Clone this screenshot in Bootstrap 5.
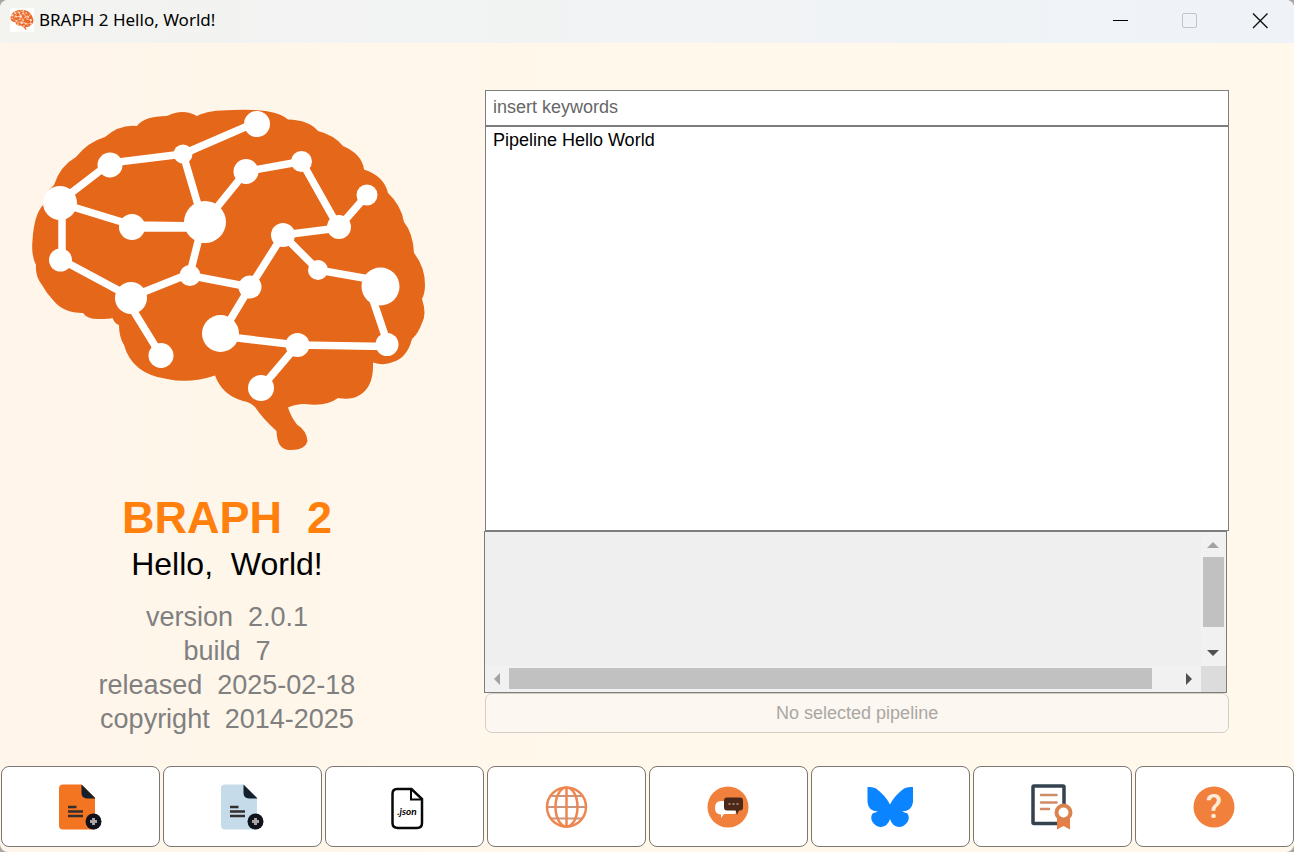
<!DOCTYPE html>
<html lang="en">
<head>
<meta charset="utf-8">
<meta name="viewport" content="width=device-width, initial-scale=1">
<title>BRAPH 2 Hello, World!</title>
<link href="https://cdn.jsdelivr.net/npm/bootstrap@5.3.0/dist/css/bootstrap.min.css" rel="stylesheet">
<style>
  html { background: #a9a6a6; }
  body { background: transparent; font-family: "Liberation Sans", Arial, sans-serif; }
  .app-window { background: linear-gradient(90deg, #fff5ea, #fff8eb 50%); border-radius: 8px; overflow: hidden; }
  .title-bar { height: 43px; padding-left: 10px; background: linear-gradient(90deg, #f3f3f0, #eff3f8); font-family: "Noto Sans", sans-serif; font-size: 17px; line-height: 24px; color: #000; }
  .title-bar h1 { font-size: 17px; line-height: 24px; font-weight: 400; margin: 0 0 0 5px; }
  .app-icon { background: #fff; }
  .window-control { width: 70px; border: 0; background: transparent; }
  .about { width: 35%; padding: 66px 0 0 1px; color: #808080; white-space: pre; }
  .brain { width: 394px; max-width: 88%; margin: 0 0 42px 5px; }
  .about h2 { font-size: 45px; line-height: 50px; font-weight: 700; color: #ff800d; margin: 0; }
  .about .subtitle { font-size: 32px; line-height: 42px; color: #000; margin-bottom: 15px; }
  .about .facts { font-size: 27px; line-height: 34px; }
  .browser { margin: 47px 5% 33px 32px; font-size: 18px; }
  .browser .form-control, .browser .form-select { font-size: 18px; line-height: 22px; border: 1px solid #7d7d7d; border-radius: 0; background-color: #fff; color: #000; }
  .browser .keyword-box { height: 36px; padding: 0 7px 2px; }
  .keyword-box::placeholder { color: #666; opacity: 1; }
  .browser .pipeline-list { padding: 3px 7px; overflow: hidden; min-height: 200px; }
  .pipeline-list option { padding: 0; min-height: 22px; }
  .notes-panel { display: grid; grid-template-columns: 1fr 25px; grid-template-rows: 1fr 26px; height: 162px; margin: 0 2px 0 -1px; border: 1px solid #7d7d7d; background: #f0f0f0; }
  .browser .notes-text { border: 0; background: #efefef; resize: none; }
  .track-v, .track-h { background: #f1f1f1; }
  .track-v { padding: 10px 2px 10px 1px; }
  .track-h { padding: 1px 9px 2px; }
  .thumb { background: #c1c1c1; }
  .track-v .thumb { height: 70px; margin-top: 9px; width: 21px; }
  .track-h .thumb { height: 21px; width: 93%; margin: 0 34px 0 9px; }
  .corner { background: #dcdcdc; }
  .browser .open-pipeline { height: 40px; padding: 0; font-size: 18px; border: 1px solid #d3cec6; border-radius: 7px; background: #fcf7f1; color: #aaa7a3; opacity: 1; }
  .tool-bar { gap: 3px; padding: 0 0 5px 1px; }
  .tool { flex: 1 1 0; height: 81px; padding: 0; background: #fff; border: 1px solid #7a7672; border-radius: 8px; }
  .tool:hover { background: #fff; border-color: #7a7672; }
</style>
</head>
<body>
<svg class="d-none" aria-hidden="true">
  <defs>
    <path id="brain-shape" d="M43 205Q44 194 54 185Q60 166 76 157Q88 142 105 137Q120 124 137 126Q144 116 167 116Q183 108 197 116Q208 110 233 110Q262 109 275 113Q283 115 288 119.500Q309 120 318 131Q334 135 343 146Q362 154 364 169.500Q384 176 388 193Q401 205 404 222Q413 233 414 253Q425 267 425 285Q425 293 422 299Q427 314 422 323Q418 334 412 339Q407 358 393 362Q384 366 373 362.500Q374 388 358 396Q351 400 338 398Q326 407 305 404Q295 404 288 407.500Q291 417 297 424.500Q307 431 307.500 441Q305 450 291 450Q277 451 276.500 431Q263 419 255 407Q250 402 243 401Q222 395 215 375.500Q190 384 167 379Q132 374 124 345Q119 337 119 325Q115 324 112.500 318Q110 319 98 319Q87 319 83 313Q63 313 53 300Q47 294 42 285Q35 276 36 265Q31 255 32.500 240Q34 215 43 205Z"/>
    <g id="brain-network">
      <path fill="none" stroke-width="7.500" d="M62 200L110 163L183 154L257 122M60 203L132 225L205 226M132 228H205M183 154L203 222M62 203V260L131 297L190 273.500L203 222M190 275.500L250 287L283 235L339 228L301.500 161.500L246 171.500L205 222M339 227L367 195M283 235L318 270L380.500 281M373 300L388 344.500L387 346.500L297.500 345L220.500 336L250 287M297.500 345L261 388M133 310L161 355.500"/>
      <g stroke="none">
        <circle cx="60" cy="203" r="17"/><circle cx="110" cy="165" r="12.500"/><circle cx="183" cy="154" r="9.500"/><circle cx="257" cy="124" r="13"/><circle cx="132" cy="227" r="13"/><circle cx="205" cy="222" r="21"/><circle cx="60.500" cy="260" r="11.500"/><circle cx="131" cy="298" r="16"/><circle cx="190" cy="275.500" r="10.500"/><circle cx="250" cy="287" r="11.500"/><circle cx="246" cy="171.500" r="12.500"/><circle cx="301.500" cy="161.500" r="10.500"/><circle cx="339" cy="227" r="12"/><circle cx="367" cy="195" r="10.500"/><circle cx="283" cy="235" r="12"/><circle cx="318" cy="270" r="10"/><circle cx="380.500" cy="286.500" r="19"/><circle cx="387" cy="344.500" r="11.500"/><circle cx="297.500" cy="345" r="12"/><circle cx="220.500" cy="333.500" r="18.500"/><circle cx="261" cy="388" r="13"/><circle cx="161" cy="355.500" r="12.500"/>
      </g>
    </g>
    <g id="new-file">
      <path d="M12 7.500H30.500L44 20.500V52.500H12Q8 52.500 8 48.500V11.500Q8 7.500 12 7.500Z"/>
      <path fill="#14202c" d="M30.500 7.500L44.500 21.500H36Q30.500 21 30.500 16Z"/>
      <path stroke="#352e2e" stroke-width="2.500" d="M17 30H25.500M17 34.500H32M17 39H32"/>
      <circle cx="42.500" cy="44.500" r="8" fill="#11131c"/>
      <path stroke="#aaa3a3" stroke-width="3" d="M42.500 41V48M39 44.500H46"/>
    </g>
  </defs>
</svg>

<div class="app-window d-flex flex-column min-vh-100">
  <header class="title-bar d-flex align-items-stretch">
    <div class="d-flex align-items-center me-auto pb-1">
      <svg class="app-icon" width="24" height="24" viewBox="23 78 412 412" aria-hidden="true">
        <use href="#brain-shape" fill="#e8692a"/><use href="#brain-network" fill="#ffe3cf" stroke="#ffe3cf"/>
        <path d="M90 130L130 190L100 250M230 120L270 200L350 250M150 320L260 320L340 380M160 130L240 270" fill="none" stroke="#ffe3cf" stroke-width="12"/>
      </svg>
      <h1>BRAPH 2 Hello, World!</h1>
    </div>
    <button class="window-control p-0" aria-label="Minimize"><svg class="d-block mx-auto" width="17" height="17" viewBox="0 0 17 17"><path d="M2 7.500H17" stroke="#000"/></svg></button>
    <button class="window-control p-0" aria-label="Maximize" disabled><svg class="d-block mx-auto" width="17" height="17" viewBox="0 0 17 17"><rect x="1.500" y="0.500" width="14" height="14" rx="1.500" fill="none" stroke="#c1c5c9"/></svg></button>
    <button class="window-control p-0" aria-label="Close"><svg class="d-block mx-auto" width="17" height="17" viewBox="0 0 17 17"><path d="M2 .500L16.500 15M16.500 .500L2 15" stroke="#111" stroke-width="1.400"/></svg></button>
  </header>

  <main class="d-flex flex-grow-1">
    <section class="about d-flex flex-column align-items-center flex-shrink-0">
      <svg class="brain" viewBox="32 109 394 342" role="img" aria-label="Brain network"><use href="#brain-shape" fill="#e5671a"/><use href="#brain-network" fill="#fff" stroke="#fff"/></svg>
      <h2>BRAPH  2</h2>
      <div class="subtitle">Hello,  World!</div>
      <div class="facts">version  2.0.1</div>
      <div class="facts">build  7</div>
      <div class="facts">released  2025-02-18</div>
      <div class="facts">copyright  2014-2025</div>
    </section>

    <section class="browser d-flex flex-column flex-grow-1">
      <input class="form-control keyword-box" type="text" placeholder="insert keywords" aria-label="Keywords">
      <select class="form-select pipeline-list flex-grow-1" size="10" aria-label="Pipelines"><option>Pipeline Hello World</option></select>
      <div class="notes-panel">
        <textarea class="form-control notes-text" aria-label="Pipeline notes" disabled></textarea>
        <div class="track-v d-flex flex-column align-items-center">
          <svg width="12" height="6" viewBox="0 0 12 6"><path d="M0 6L6 0L12 6Z" fill="#a3a3a3"/></svg>
          <div class="thumb"></div>
          <svg class="mt-auto" width="12" height="6" viewBox="0 0 12 6"><path d="M0 0L6 6L12 0Z" fill="#505050"/></svg>
        </div>
        <div class="track-h d-flex align-items-center">
          <svg class="flex-shrink-0" width="6" height="12" viewBox="0 0 6 12"><path d="M6 0L0 6L6 12Z" fill="#a3a3a3"/></svg>
          <div class="thumb"></div>
          <svg class="flex-shrink-0 ms-auto" width="6" height="12" viewBox="0 0 6 12"><path d="M0 0L6 6L0 12Z" fill="#505050"/></svg>
        </div>
        <div class="corner"></div>
      </div>
      <button class="btn open-pipeline" disabled>No selected pipeline</button>
    </section>
  </main>

  <footer class="tool-bar d-flex">
    <button class="btn tool" aria-label="New pipeline"><svg width="60" height="60" viewBox="0 0 60 60" fill="#f37421"><use href="#new-file"/></svg></button>
    <button class="btn tool" aria-label="Open pipeline"><svg width="60" height="60" viewBox="0 0 60 60" fill="#c5dbea"><use href="#new-file"/></svg></button>
    <button class="btn tool" aria-label="Import JSON"><svg width="60" height="60" viewBox="0 0 60 60">
      <path d="M22 12H36.500L47 22V46Q47 51 42 51H23Q17.500 51 17.500 46V17Q17.500 12 22 12Z" fill="none" stroke="#080808" stroke-width="2.500"/><path d="M36 12V22.500H47" fill="none" stroke="#080808" stroke-width="2"/>
      <text x="32" y="38" text-anchor="middle" font-family="Lato, sans-serif" font-style="italic" font-weight="700" font-size="10">.json</text></svg></button>
    <button class="btn tool" aria-label="Website"><svg width="60" height="60" viewBox="0 0 60 60" fill="none" stroke="#ee8650" stroke-width="2.500">
      <path stroke="#ca9580" stroke-width="2" d="M9 30H50M13 19H46M13 41.500H46"/><circle cx="29.500" cy="30" r="19.500"/><ellipse cx="29.500" cy="30" rx="11" ry="19.500"/><path d="M29.500 11V49"/></svg></button>
    <button class="btn tool" aria-label="Forum"><svg width="60" height="60" viewBox="0 0 60 60">
      <circle cx="29" cy="30" r="20.500" fill="#f1803c"/><path fill="#fff" d="M22 24H34Q39 24 39 29V33Q39 37 34 37H25L22 41V37.500Q16 37 16 31Q16 24 22 24Z"/>
      <path fill="#4b2817" d="M28 20.500H41Q44 20.500 44 23.500V30.500Q44 33.500 41 33.500H40L38 38L36.500 33.500H28Q25 33.500 25 30.500V23.500Q25 20.500 28 20.500Z"/><path stroke="#c49a84" stroke-width="1.500" stroke-dasharray="2 2" d="M29.500 27H40"/></svg></button>
    <button class="btn tool" aria-label="Bluesky"><svg width="60" height="60" viewBox="0 0 60 60" fill="#0a84ff">
      <path d="M6.500 10Q12 9.500 15 11.500Q25 19 29 27.500Q33 19 43 11.500Q46 9.500 52 10V25Q51 34 41 34.500L46.500 36.500Q49 41 46.500 45Q43 50 38 50Q31 49 29 42Q27 49 20 50Q15 50 11.500 45Q9 41 11.500 36.500L17 34.500Q7 34 6.500 25Z"/></svg></button>
    <button class="btn tool" aria-label="License"><svg width="60" height="60" viewBox="0 0 60 60" fill="none">
      <rect x="10" y="9" width="31" height="37.500" rx="1" stroke="#34424f" stroke-width="3.500"/><path stroke="#cf8c68" stroke-width="2.500" stroke-linecap="round" d="M18 18H33.500M18 25.500H33.500M18 32H26"/>
      <path fill="#e57f45" d="M34 41H47V52.500L40.500 49L34 52.500Z"/><circle cx="40.500" cy="35.500" r="7" fill="#fff" stroke="#db834f" stroke-width="4"/></svg></button>
    <button class="btn tool" aria-label="Help"><svg width="60" height="60" viewBox="0 0 60 60">
      <circle cx="29" cy="30" r="20.500" fill="#f1803c"/><text x="29" y="41" text-anchor="middle" font-family="Roboto, sans-serif" font-weight="500" font-size="33" fill="#ffedd9">?</text></svg></button>
  </footer>
</div>
<script src="https://cdn.jsdelivr.net/npm/bootstrap@5.3.0/dist/js/bootstrap.bundle.min.js"></script>
</body>
</html>
